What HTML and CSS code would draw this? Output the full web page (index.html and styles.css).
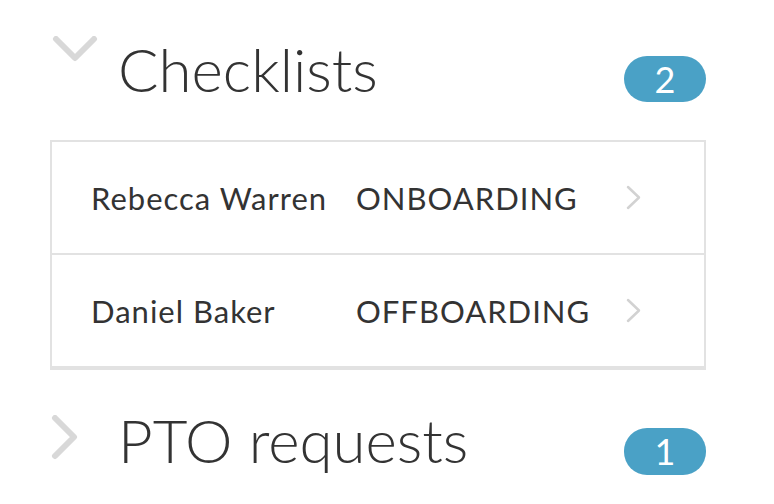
FILE: index.html
```html
<!DOCTYPE html>
<html lang="en">
<head>
  <meta charset="UTF-8" />
  <meta name="viewport" content="width=device-width, initial-scale=1.0"/>
  <title>Checklists</title>
  <link rel="stylesheet" href="styles.css">
</head>
<body>

  <div class="panel">
    <div class="section-head open">
      <span class="toggle">
        <svg width="50" height="30" viewBox="0 0 50 30"><polyline points="6,3 25,22 44,3" /></svg>
      </span>
      <h2>Checklists</h2>
      <span class="count">2</span>
    </div>

    <div class="card">
      <div class="row">
        <span class="name">Rebecca Warren</span>
        <span class="type">ONBOARDING</span>
        <svg class="go" width="16" height="26" viewBox="0 0 16 26"><polyline points="2,2 13,12.5 2,23" /></svg>
      </div>
      <div class="row">
        <span class="name">Daniel Baker</span>
        <span class="type">OFFBOARDING</span>
        <svg class="go" width="16" height="26" viewBox="0 0 16 26"><polyline points="2,2 13,12.5 2,23" /></svg>
      </div>
    </div>

    <div class="section-head closed">
      <span class="toggle">
        <svg width="30" height="50" viewBox="0 0 30 50"><polyline points="5,3 24,22 5,41" /></svg>
      </span>
      <h2>PTO requests</h2>
      <span class="count">1</span>
    </div>
  </div>

</body>
</html>
```

FILE: styles.css
```css
body {
  margin: 0;
  font-family: Lato, "Open Sans", sans-serif;
  background: #fff;
  color: #333;
}
.panel {
  width: 656px;
  padding-left: 50px;
}
.section-head {
  display: flex;
  align-items: flex-start;
}
.section-head.open {
  padding-top: 39px;
  margin-bottom: 38px;
}
.section-head.closed {
  padding-top: 40px;
}
.toggle {
  width: 68px;
  flex-shrink: 0;
}
.toggle svg {
  display: block;
  fill: none;
  stroke: #d8d8d8;
  stroke-width: 6;
  stroke-linecap: round;
  stroke-linejoin: round;
}
.open .toggle svg {
  margin-top: -3px;
}
.closed .toggle svg {
  margin-top: 5px;
}
h2 {
  margin: 0;
  font-size: 60px;
  line-height: 60px;
  font-weight: 300;
  color: #333;
}
.count {
  margin-left: auto;
  margin-top: 17px;
  width: 82px;
  height: 46px;
  border-radius: 23px;
  background: #4aa1c6;
  color: #fff;
  font-size: 36px;
  line-height: 46px;
  text-align: center;
}
.closed .count {
  margin-top: 18px;
  height: 47px;
}
.card {
  border: 2px solid #e2e2e2;
  border-bottom-width: 4px;
}
.row {
  display: grid;
  grid-template-columns: 265px 1fr auto;
  align-items: center;
  height: 111px;
  padding: 0 62px 0 39px;
  font-size: 31px;
  letter-spacing: 1px;
}
.row + .row {
  border-top: 2px solid #e2e2e2;
}
.go {
  display: block;
  fill: none;
  stroke: #d2d2d2;
  stroke-width: 2.5;
  stroke-linecap: round;
  stroke-linejoin: round;
}
```
